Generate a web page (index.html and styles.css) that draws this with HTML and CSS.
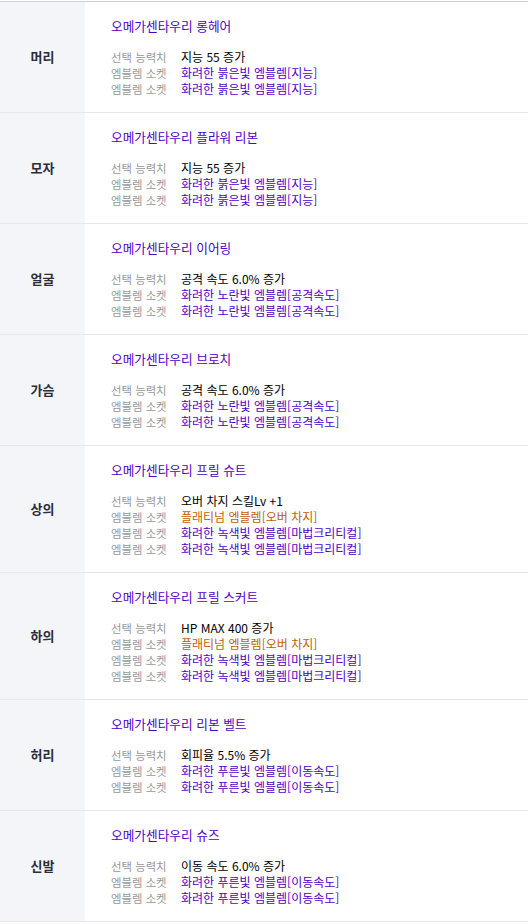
FILE: index.html
```
<!DOCTYPE html>
<html lang="ko">
<head>
    <meta charset="UTF-8">
    <meta name="viewport" content="width=device-width, initial-scale=1.0">
    <title>장비 정보</title>
    <link rel="stylesheet" href="styles.css">
</head>
<body>
    <div class="equip">
        <div class="row">
            <div class="slot">머리</div>
            <div class="info">
                <div class="name">오메가센타우리 롱헤어</div>
                <div class="line"><span class="label">선택 능력치</span><span class="val">지능 55 증가</span></div>
                <div class="line"><span class="label">엠블렘 소켓</span><span class="val purple">화려한 붉은빛 엠블렘[지능]</span></div>
                <div class="line"><span class="label">엠블렘 소켓</span><span class="val purple">화려한 붉은빛 엠블렘[지능]</span></div>
            </div>
        </div>
        <div class="row">
            <div class="slot">모자</div>
            <div class="info">
                <div class="name">오메가센타우리 플라워 리본</div>
                <div class="line"><span class="label">선택 능력치</span><span class="val">지능 55 증가</span></div>
                <div class="line"><span class="label">엠블렘 소켓</span><span class="val purple">화려한 붉은빛 엠블렘[지능]</span></div>
                <div class="line"><span class="label">엠블렘 소켓</span><span class="val purple">화려한 붉은빛 엠블렘[지능]</span></div>
            </div>
        </div>
        <div class="row">
            <div class="slot">얼굴</div>
            <div class="info">
                <div class="name">오메가센타우리 이어링</div>
                <div class="line"><span class="label">선택 능력치</span><span class="val">공격 속도 6.0% 증가</span></div>
                <div class="line"><span class="label">엠블렘 소켓</span><span class="val purple">화려한 노란빛 엠블렘[공격속도]</span></div>
                <div class="line"><span class="label">엠블렘 소켓</span><span class="val purple">화려한 노란빛 엠블렘[공격속도]</span></div>
            </div>
        </div>
        <div class="row">
            <div class="slot">가슴</div>
            <div class="info">
                <div class="name">오메가센타우리 브로치</div>
                <div class="line"><span class="label">선택 능력치</span><span class="val">공격 속도 6.0% 증가</span></div>
                <div class="line"><span class="label">엠블렘 소켓</span><span class="val purple">화려한 노란빛 엠블렘[공격속도]</span></div>
                <div class="line"><span class="label">엠블렘 소켓</span><span class="val purple">화려한 노란빛 엠블렘[공격속도]</span></div>
            </div>
        </div>
        <div class="row">
            <div class="slot">상의</div>
            <div class="info">
                <div class="name">오메가센타우리 프릴 슈트</div>
                <div class="line"><span class="label">선택 능력치</span><span class="val">오버 차지 스킬Lv +1</span></div>
                <div class="line"><span class="label">엠블렘 소켓</span><span class="val orange">플래티넘 엠블렘[오버 차지]</span></div>
                <div class="line"><span class="label">엠블렘 소켓</span><span class="val purple">화려한 녹색빛 엠블렘[마법크리티컬]</span></div>
                <div class="line"><span class="label">엠블렘 소켓</span><span class="val purple">화려한 녹색빛 엠블렘[마법크리티컬]</span></div>
            </div>
        </div>
        <div class="row">
            <div class="slot">하의</div>
            <div class="info">
                <div class="name">오메가센타우리 프릴 스커트</div>
                <div class="line"><span class="label">선택 능력치</span><span class="val">HP MAX 400 증가</span></div>
                <div class="line"><span class="label">엠블렘 소켓</span><span class="val orange">플래티넘 엠블렘[오버 차지]</span></div>
                <div class="line"><span class="label">엠블렘 소켓</span><span class="val purple">화려한 녹색빛 엠블렘[마법크리티컬]</span></div>
                <div class="line"><span class="label">엠블렘 소켓</span><span class="val purple">화려한 녹색빛 엠블렘[마법크리티컬]</span></div>
            </div>
        </div>
        <div class="row">
            <div class="slot">허리</div>
            <div class="info">
                <div class="name">오메가센타우리 리본 벨트</div>
                <div class="line"><span class="label">선택 능력치</span><span class="val">회피율 5.5% 증가</span></div>
                <div class="line"><span class="label">엠블렘 소켓</span><span class="val purple">화려한 푸른빛 엠블렘[이동속도]</span></div>
                <div class="line"><span class="label">엠블렘 소켓</span><span class="val purple">화려한 푸른빛 엠블렘[이동속도]</span></div>
            </div>
        </div>
        <div class="row">
            <div class="slot">신발</div>
            <div class="info">
                <div class="name">오메가센타우리 슈즈</div>
                <div class="line"><span class="label">선택 능력치</span><span class="val">이동 속도 6.0% 증가</span></div>
                <div class="line"><span class="label">엠블렘 소켓</span><span class="val purple">화려한 푸른빛 엠블렘[이동속도]</span></div>
                <div class="line"><span class="label">엠블렘 소켓</span><span class="val purple">화려한 푸른빛 엠블렘[이동속도]</span></div>
            </div>
        </div>
    </div>
</body>
</html>
```

FILE: styles.css
```
/* 장비 목록 */
body {
    margin: 0;
    padding: 0;
    background-color: #fff;
    font-family: "Noto Sans CJK KR", "Noto Sans", sans-serif;
    font-size: 12px;
    color: #000;
}
.equip {
    margin-top: 1px;
    border-top: 1px solid #d0d0d4;
}
.row {
    display: flex;
    border-bottom: 1px solid #e6e6ec;
}
.slot {
    width: 85px;
    flex-shrink: 0;
    background-color: #f4f5f9;
    display: flex;
    align-items: center;
    justify-content: center;
    font-size: 13px;
    font-weight: bold;
    color: #2b2d3a;
    padding-bottom: 1px;
}
.info {
    flex: 1;
    padding: 16px 0 15px 26px;
    line-height: 16px;
}
.name {
    font-size: 12.7px;
    color: #5000c8;
    margin-bottom: 15px;
}
.line {
    display: flex;
    height: 16px;
}
.label {
    width: 70px;
    flex-shrink: 0;
    font-size: 11.4px;
    color: #999;
}
.val.purple {
    color: #5000c8;
}
.val.orange {
    color: #c06000;
}
```
